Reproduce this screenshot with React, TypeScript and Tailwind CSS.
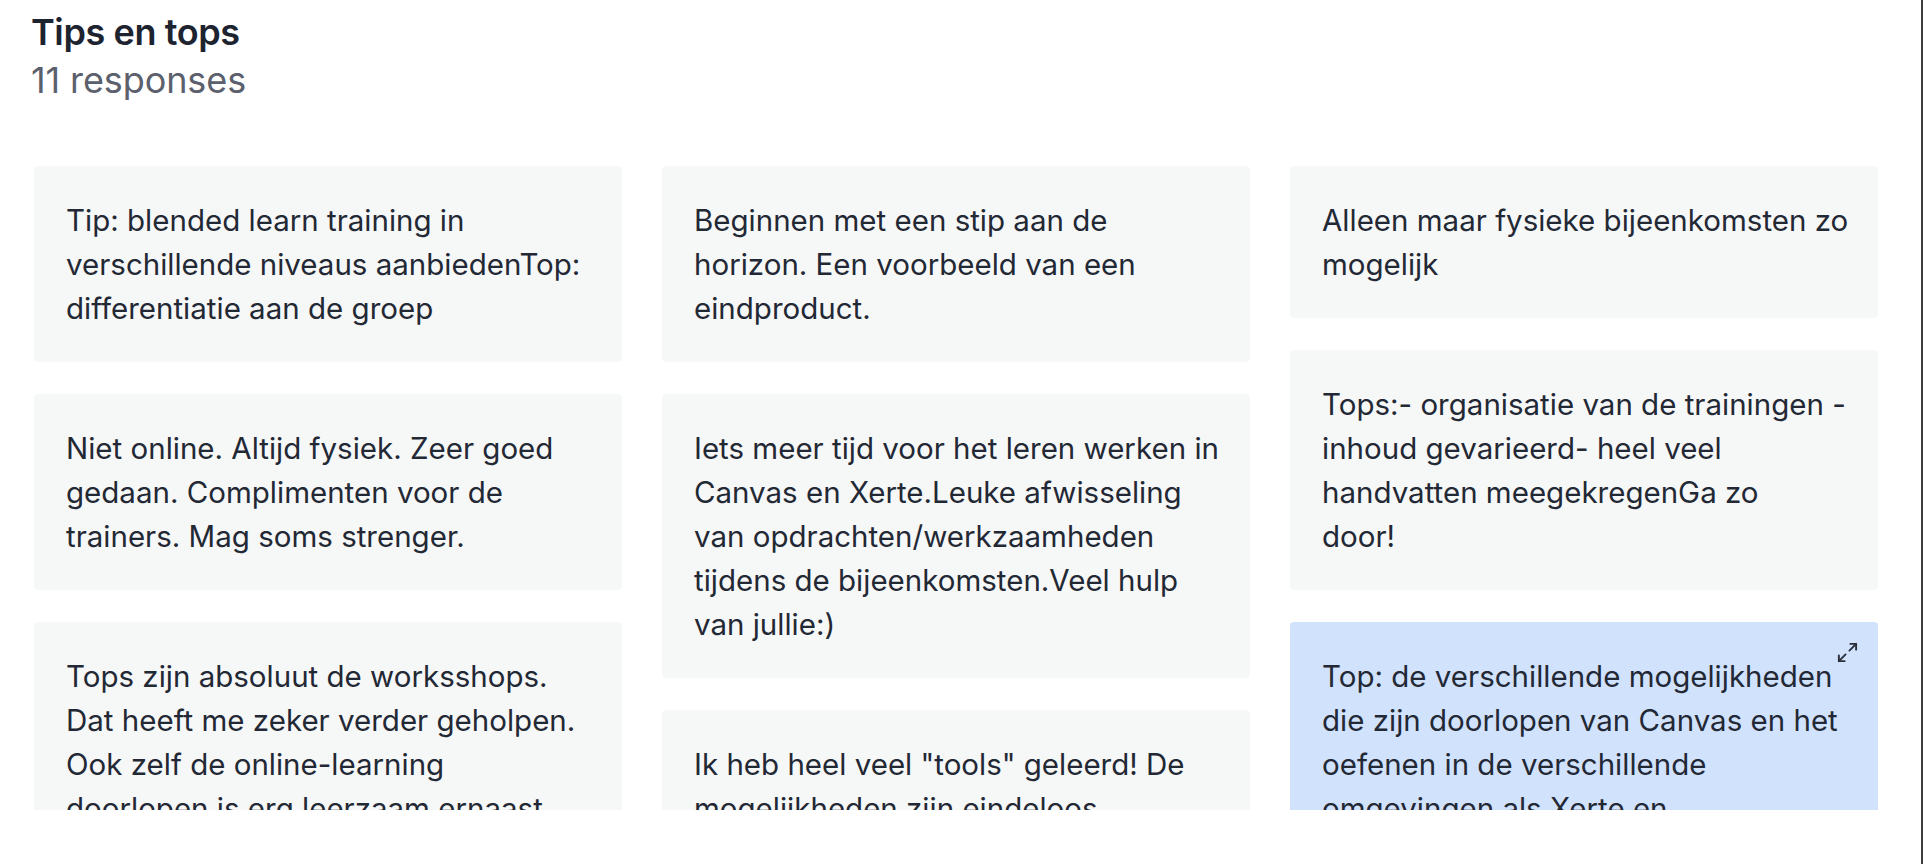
import React from "react";

type Card = { lines: string[]; active?: boolean };

const columns: Card[][] = [
  [
    { lines: ["Tip: blended learn training in", "verschillende niveaus aanbiedenTop:", "differentiatie aan de groep"] },
    { lines: ["Niet online. Altijd fysiek. Zeer goed", "gedaan. Complimenten voor de", "trainers. Mag soms strenger."] },
    {
      lines: [
        "Tops zijn absoluut de worksshops.",
        "Dat heeft me zeker verder geholpen.",
        "Ook zelf de online-learning",
        "doorlopen is erg leerzaam ernaast",
        "en de trainers waren fijn.",
      ],
    },
  ],
  [
    { lines: ["Beginnen met een stip aan de", "horizon. Een voorbeeld van een", "eindproduct."] },
    {
      lines: [
        "Iets meer tijd voor het leren werken in",
        "Canvas en Xerte.Leuke afwisseling",
        "van opdrachten/werkzaamheden",
        "tijdens de bijeenkomsten.Veel hulp",
        "van jullie:)",
      ],
    },
    { lines: ["Ik heb heel veel \"tools\" geleerd! De", "mogelijkheden zijn eindeloos.", "Dank jullie wel."] },
  ],
  [
    { lines: ["Alleen maar fysieke bijeenkomsten zo", "mogelijk"] },
    { lines: ["Tops:- organisatie van de trainingen -", "inhoud gevarieerd- heel veel", "handvatten meegekregenGa zo", "door!"] },
    {
      active: true,
      lines: [
        "Top: de verschillende mogelijkheden",
        "die zijn doorlopen van Canvas en het",
        "oefenen in de verschillende",
        "omgevingen als Xerte en",
        "Canvas.",
      ],
    },
  ],
];

function ExpandIcon() {
  return (
    <svg width="23" height="23" viewBox="0 0 24 24" fill="none" stroke="#2a2f3a" strokeWidth="2" strokeLinecap="round" strokeLinejoin="round">
      <polyline points="15 3 21 3 21 9" />
      <polyline points="9 21 3 21 3 15" />
      <line x1="21" y1="3" x2="14" y2="10" />
      <line x1="3" y1="21" x2="10" y2="14" />
    </svg>
  );
}

export default function App() {
  return (
    <div className="flex h-[864px] w-full bg-white" style={{ fontFamily: "Inter, 'Noto Sans', sans-serif" }}>
      <div className="flex min-w-0 flex-1 flex-col">
        <div className="pl-[31px] pt-[8px]">
          <div className="text-[36px] font-semibold leading-[48px] tracking-[-0.4px] text-[#1e2330]">Tips en tops</div>
          <div className="text-[36px] font-normal leading-[48px] tracking-[-0.1px] text-[#5b606c]">11 responses</div>
        </div>
        <div className="ml-[34px] mt-[62px] flex h-[644px] w-[1845px] gap-[40px] overflow-hidden">
          {columns.map((col, ci) => (
            <div key={ci} className="flex w-[588px] shrink-0 flex-col gap-[32px]">
              {col.map((card, i) => (
                <div
                  key={i}
                  className={
                    "relative rounded-[4px] px-[32px] py-[32px] " +
                    (card.active ? "bg-[#d1e2fd]" : "bg-[#f6f7f7]")
                  }
                >
                  {card.active && (
                    <div className="absolute right-[19px] top-[19px]">
                      <ExpandIcon />
                    </div>
                  )}
                  {card.lines.map((l, li) => (
                    <div key={li} className="whitespace-nowrap text-[29.5px] leading-[44px] text-[#232835]">
                      {l}
                    </div>
                  ))}
                </div>
              ))}
            </div>
          ))}
        </div>
      </div>
      <div className="w-[2px] shrink-0 bg-[#3d3d3d]" />
    </div>
  );
}
